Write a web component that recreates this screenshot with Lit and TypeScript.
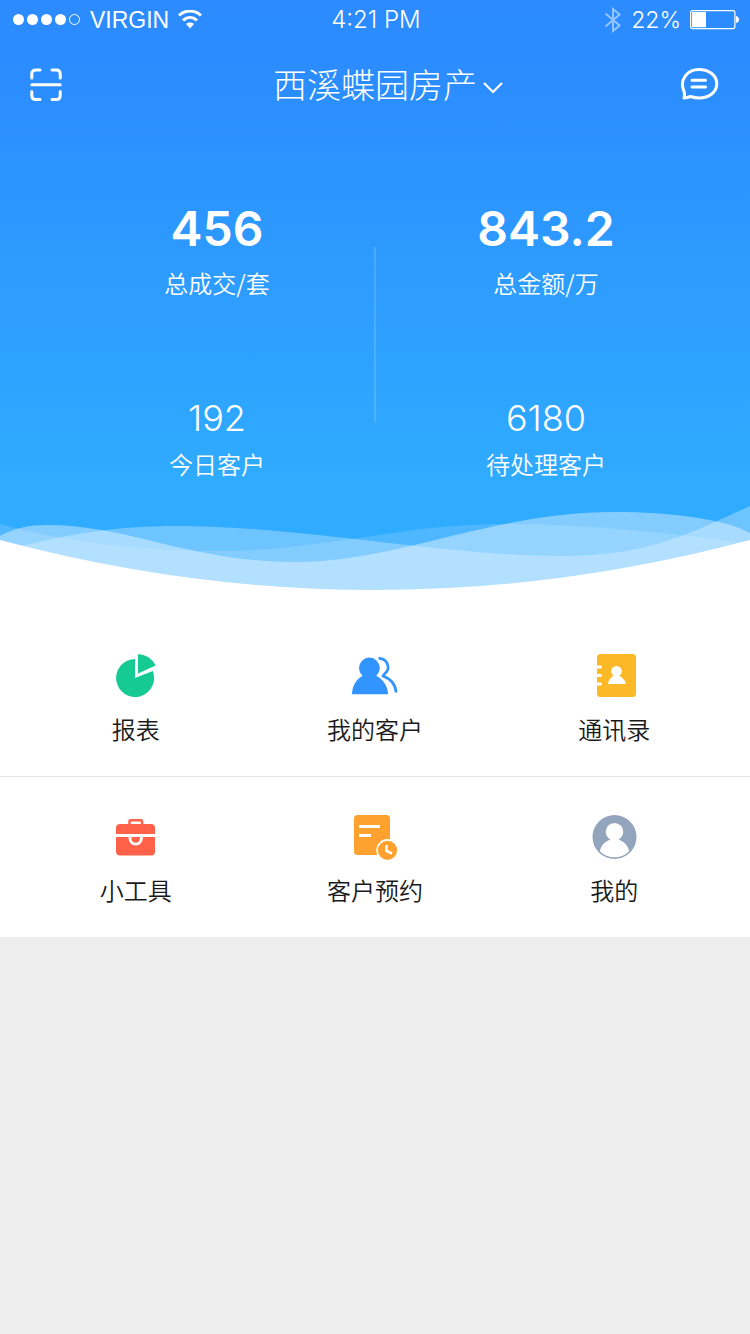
import { LitElement, html, css, svg } from "lit";
import { customElement, property } from "lit/decorators.js";

interface Stat {
  value: string;
  label: string;
  strong?: boolean;
}

interface MenuItem {
  label: string;
  icon: unknown;
}

const reportIcon = svg`
  <g fill="#15cb93">
    <path d="M23 26V7A19 19 0 1 0 40.8 19Z" />
    <path d="M26 21.5V2A20 20 0 0 1 43.7 13.6Z" />
  </g>`;

const customersIcon = svg`
  <circle cx="18.4" cy="16" r="10.4" fill="#3294ff" />
  <path d="M1 42.2C1 34 5.500 26.500 12.500 23.500H24.500C31.500 26.500 37 34 37 42.200Z" fill="#3294ff" />
  <path d="M27.5 6.4C33.5 6.2 37.2 10.5 37.2 15.5C37.2 20.5 32.5 21.5 32 24C40 27 44.5 32 45.2 40.5"
    fill="none" stroke="#3294ff" stroke-width="2.7" />`;

const contactsIcon = svg`
  <rect x="7" y="2" width="39" height="43" rx="3.5" fill="#fbb927" />
  <g fill="#fff">
    <rect x="4" y="13.5" width="8" height="3" rx="1.5" />
    <rect x="4" y="22" width="8" height="3" rx="1.5" />
    <rect x="4" y="30.5" width="8" height="3" rx="1.5" />
    <circle cx="26.5" cy="19.3" r="5.3" />
    <path d="M18 32C18.5 27.5 21 25 24.5 23.5H28.5C32 25 35 27.5 36 32Z" />
  </g>`;

const toolsIcon = svg`
  <rect x="4" y="11" width="39" height="31.5" rx="4" fill="#ff6248" />
  <path d="M17.5 12V8.2Q17.5 7.2 18.5 7.2H29Q30 7.2 30 8.2V12" fill="none" stroke="#ff6248" stroke-width="2.5" />
  <path d="M4 22.5H43" stroke="#fff" stroke-width="3" />
  <path d="M18 23V25.5A5.7 5.7 0 0 0 29.4 25.5V23" fill="none" stroke="#fff" stroke-width="2.8" />`;

const appointmentIcon = svg`
  <rect x="3" y="2" width="36" height="40" rx="3.5" fill="#ffa12e" />
  <path d="M8 13.5H29M8 22.5H20" stroke="#fff" stroke-width="3" />
  <circle cx="36.5" cy="37.3" r="10.4" fill="#ffa12e" stroke="#fff" stroke-width="1.6" />
  <path d="M35.5 32V38L41 40.5" fill="none" stroke="#fff" stroke-width="2.5" />`;

const mineIcon = svg`
  <circle cx="24.5" cy="24" r="22" fill="#92a5bd" />
  <circle cx="24.5" cy="18.8" r="8.8" fill="#fff" />
  <path d="M9.8 38C11.5 31.5 15.5 28.5 20.5 26.5V24.5H28.5V26.5C33.5 28.5 37.5 31.5 39.2 38C35.5 42 30.5 44.3 24.5 44.3S13.5 42 9.8 38Z" fill="#fff" />`;

@customElement("status-bar")
class StatusBar extends LitElement {
  static styles = css`
    :host {
      display: grid;
      grid-template-columns: 1fr auto 1fr;
      align-items: center;
      height: 40px;
      padding: 0 11px 0 13px;
      font: 23px/40px "Liberation Sans", Arial, sans-serif;
    }
    .side {
      display: flex;
      align-items: center;
      gap: 9px;
    }
    .end {
      justify-content: flex-end;
    }
    .time {
      font-family: Inter, sans-serif;
      font-size: 24px;
      font-weight: 300;
    }
    .power {
      font-family: Inter, sans-serif;
      font-weight: 300;
    }
    .faded {
      opacity: 0.5;
    }
    svg {
      display: block;
      flex: none;
    }
  `;

  render() {
    return html`
      <div class="side">
        <svg width="68" height="12" viewBox="0 0 68 12" fill="#fff" aria-hidden="true">
          <circle cx="5.5" cy="5.5" r="5.5" />
          <circle cx="19.5" cy="5.5" r="5.5" />
          <circle cx="33.5" cy="5.5" r="5.5" />
          <circle cx="47.5" cy="5.5" r="5.5" />
          <circle cx="61.5" cy="5.5" r="5" fill="none" stroke="#fff" />
        </svg>
        <span>VIRGIN</span>
        <svg width="24" height="20" viewBox="0 0 24 20" fill="none" stroke="#fff" stroke-width="3" aria-hidden="true">
          <path d="M1 5.5C7.5 -0.5 16.5 -0.5 23 5.5" />
          <path d="M5 10.3C9.2 6.5 14.8 6.5 19 10.3" />
          <path d="M12 18.4L8 14C10.2 12 13.8 12 16 14Z" fill="#fff" stroke="none" />
        </svg>
      </div>
      <span class="time">4:21 PM</span>
      <div class="side end">
        <svg class="faded" width="18" height="26" viewBox="0 0 18 26" fill="none" stroke="#fff" stroke-width="2" aria-hidden="true">
          <path d="M1.5 6.5L15.5 18.5L9 24V2L15.5 7.5L1.5 19.5" />
        </svg>
        <span class="power">22%</span>
        <svg width="49" height="20" viewBox="0 0 49 20" aria-hidden="true">
          <rect x="0.6" y="0.6" width="44.3" height="18" rx="2" fill="none" stroke="#fff" stroke-width="1.2" />
          <rect x="2" y="2" width="14" height="15.2" fill="#fff" />
          <path d="M46 6Q49 6.5 49 9.5T46 13Z" fill="#fff" />
        </svg>
      </div>
    `;
  }
}

@customElement("stat-figure")
class StatFigure extends LitElement {
  @property({ attribute: false }) stat!: Stat;

  static styles = css`
    :host {
      display: block;
      text-align: center;
    }
    .value {
      font: 300 36px/48px Inter, sans-serif;
    }
    .strong {
      font-weight: 600;
      font-size: 48px;
      line-height: 64px;
    }
    .label {
      font: 350 24px/44px "Noto Sans CJK SC", sans-serif;
    }
  `;

  render() {
    return html`
      <div class="value ${this.stat.strong ? "strong" : ""}">${this.stat.value}</div>
      <div class="label">${this.stat.label}</div>
    `;
  }
}

@customElement("app-root")
class AppRoot extends LitElement {
  static styles = css`
    :host {
      display: block;
      min-height: 100vh;
      background: #ededed;
      font-family: "Noto Sans CJK SC", sans-serif;
    }
    svg {
      display: block;
    }
    .hero {
      color: #fff;
      background: linear-gradient(#2b8bff 0, #2b8dff 80px, #2fabff 480px, #2fabff);
    }
    .bar {
      display: grid;
      grid-template-columns: 1fr auto 1fr;
      align-items: center;
      height: 90px;
      padding: 0 30px;
    }
    .bar button {
      padding: 0;
      border: 0;
      background: none;
      color: inherit;
      cursor: pointer;
    }
    .message {
      justify-self: end;
    }
    .bar .project {
      display: flex;
      align-items: center;
      gap: 6px;
      padding: 0 0 2px 26px;
      font: 300 34px/50px "Noto Sans CJK SC", sans-serif;
    }
    .stats {
      display: grid;
      grid-template-columns: 1fr 2px 1fr;
      padding-top: 67px;
    }
    .column {
      display: grid;
      gap: 89px;
    }
    .first {
      padding-left: 60px;
    }
    .second {
      padding-right: 34px;
    }
    .rule {
      margin: 50px 0 64px;
      background: rgba(255, 255, 255, 0.15);
    }
    .wave {
      width: 100%;
      height: 104px;
    }
    .menu {
      padding-top: 26px;
      background: #fff;
    }
    .row {
      display: grid;
      grid-template-columns: repeat(3, 1fr);
      padding: 0 16px;
    }
    .row + .row {
      border-top: 1px solid #e6e6e6;
    }
    .item {
      display: flex;
      flex-direction: column;
      align-items: center;
      gap: 13px;
      padding: 36px 0 31px;
      color: #1a1a1a;
      font-size: 24px;
      font-weight: 350;
      line-height: 32px;
      text-decoration: none;
    }
  `;

  private columns: Stat[][] = [
    [
      { value: "456", label: "总成交/套", strong: true },
      { value: "192", label: "今日客户" },
    ],
    [
      { value: "843.2", label: "总金额/万", strong: true },
      { value: "6180", label: "待处理客户" },
    ],
  ];

  private rows: MenuItem[][] = [
    [
      { label: "报表", icon: reportIcon },
      { label: "我的客户", icon: customersIcon },
      { label: "通讯录", icon: contactsIcon },
    ],
    [
      { label: "小工具", icon: toolsIcon },
      { label: "客户预约", icon: appointmentIcon },
      { label: "我的", icon: mineIcon },
    ],
  ];

  private renderColumn(stats: Stat[], side: string) {
    return html`<div class="column ${side}">
      ${stats.map((stat) => html`<stat-figure .stat=${stat}></stat-figure>`)}
    </div>`;
  }

  render() {
    return html`
      <header class="hero">
        <status-bar></status-bar>
        <div class="bar">
          <button class="scan" type="button" aria-label="扫一扫">
            <svg width="32" height="34" viewBox="0 0 32 34" fill="none" stroke="#fff" stroke-width="3" stroke-linecap="round">
              <path d="M1.8 10V6Q1.8 2 5.8 2H10M22 2H26.2Q30.2 2 30.2 6V10M30.2 23.5V27.5Q30.2 31.5 26.2 31.5H22M10 31.5H5.8Q1.8 31.5 1.8 27.5V23.5M1.8 16.8H30.2" />
            </svg>
          </button>
          <button class="project" type="button" aria-haspopup="listbox">
            <span>西溪蝶园房产</span>
            <svg width="20" height="20" viewBox="0 0 20 20" fill="none" stroke="#fff" stroke-width="2.2">
              <path d="M1 9L10 18L19 9" />
            </svg>
          </button>
          <button class="message" type="button" aria-label="消息">
            <svg width="40" height="34" viewBox="0 0 40 34" fill="none" stroke="#fff" stroke-width="3" stroke-linecap="round" stroke-linejoin="round">
              <path d="M4 30C4.7 27.5 4.8 25.5 3.9 23C-0.8 12 7 1.5 19 1.5C29 1.5 36.8 7.5 36.8 15.7C36.8 24 29 30 19 30C16 30 13 29.3 10.5 28.5C8.5 29.2 6.5 29.7 4 30Z" />
              <path d="M12 12.3H25.5M12 18.9H25.5" />
            </svg>
          </button>
        </div>
        <div class="stats">
          ${this.renderColumn(this.columns[0], "first")}
          <div class="rule"></div>
          ${this.renderColumn(this.columns[1], "second")}
        </div>
        <svg class="wave" viewBox="0 0 750 104" preserveAspectRatio="none" aria-hidden="true">
          <path fill="#fff" fill-opacity="0.15" d="M0 38C80 59 150 65 220 65C320 65 400 38 505 38C590 38 680 48 750 58V104H0Z" />
          <path fill="#fff" fill-opacity="0.3" d="M0 65C70 48 110 40 180 40C300 40 440 70 560 70C650 70 690 47 750 20V104H0Z" />
          <path fill="#fff" fill-opacity="0.4" d="M0 50C14 42 30 39 47 39C130 39 190 76 295 76C400 76 490 26 615 26C670 26 725 33 750 47V104H0Z" />
          <path fill="#fff" d="M0 54Q375 154 750 54V105H0Z" />
        </svg>
      </header>
      <nav class="menu">
        ${this.rows.map(
          (row) => html`<div class="row">
            ${row.map(
              (item) => html`<a class="item" href="#">
                <svg width="48" height="48" viewBox="0 0 48 48" aria-hidden="true">${item.icon}</svg>
                <span>${item.label}</span>
              </a>`
            )}
          </div>`
        )}
      </nav>
    `;
  }
}
